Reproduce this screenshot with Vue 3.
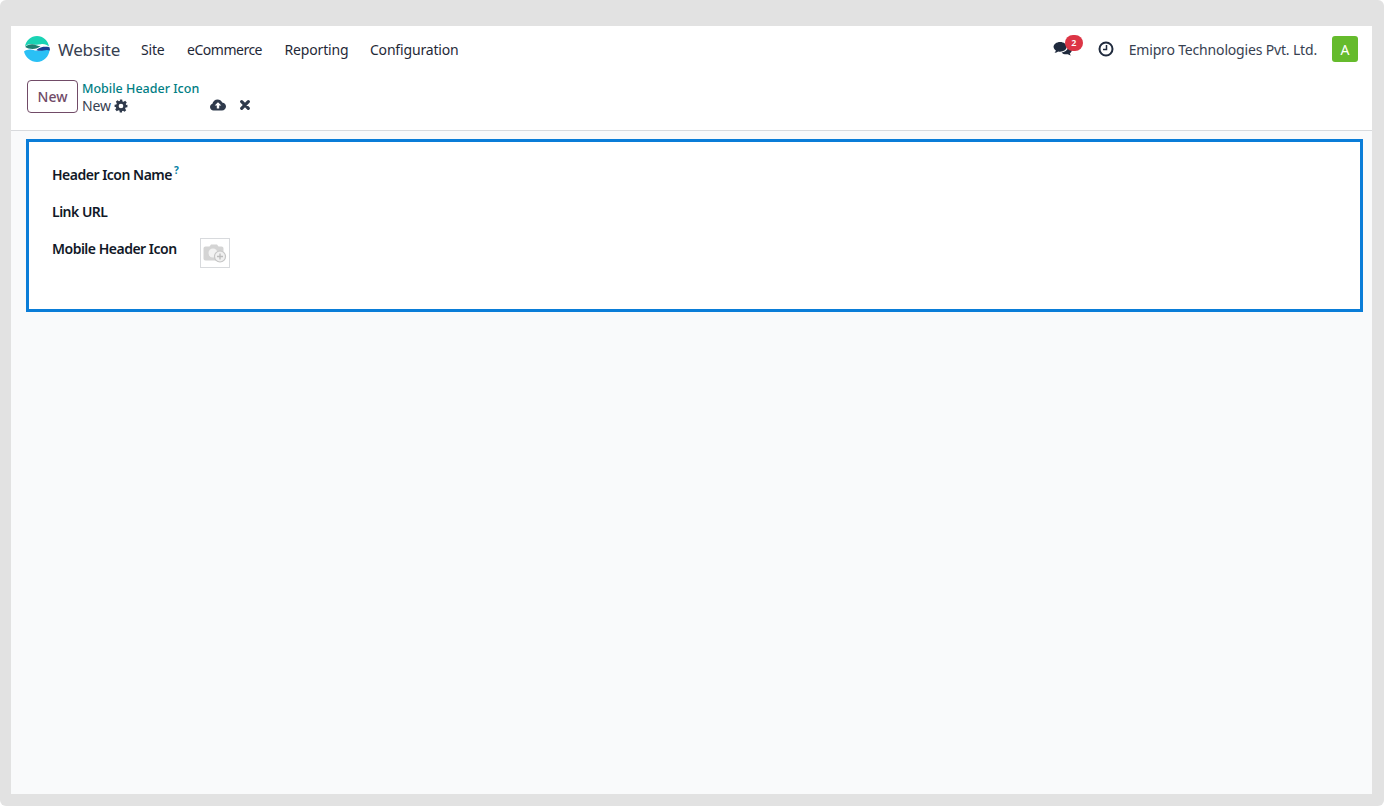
<script setup>
const menus = ['Site', 'eCommerce', 'Reporting', 'Configuration']
const fields = [
  { label: 'Header Icon Name', help: true },
  { label: 'Link URL' },
  { label: 'Mobile Header Icon', image: true }
]
</script>

<template>
  <div class="frame">
    <div class="window">
      <header class="navbar">
        <svg class="logo" viewBox="0 0 26 26" width="26" height="26">
          <path d="M1 10.500C2 4.500 7 0 13 0s11 4.500 12 10.500c-2-1.800-5-2.800-8-2.300-3 .5-5 .8-8 0-3-.8-6 0-8 2.300z" fill="#1ad3b4"/>
          <path d="M1.200 11C3.500 8.300 7 7.600 10 8.500c2 .6 4 1.500 6.500 1.800-2 1.500-4.500 2.700-8 2.700-3 0-5.500-.8-7.300-2z" fill="#1f7f72"/>
          <path d="M0 15.500c2.500-1.800 5-2.400 8-1.700 3 .7 5 1.300 8 .7 3.500-.7 6.500-1.700 9.700-1.500C25.200 20.500 19.800 26 13 26 6.800 26 1.500 21.800 0 15.500z" fill="#2ac0f5"/>
          <path d="M14.500 12.500c3-1.500 6-2.200 11-1.200.4 1.300.5 2.300.4 3.100-2-.7-4-.7-6.400 0-2.500.7-5 .5-7-.2.500-.6 1-1.200 2-1.700z" fill="#1c3f94"/>
        </svg>
        <span class="brand">Website</span>
        <nav class="menu">
          <span v-for="m in menus" :key="m" class="menu-item">{{ m }}</span>
        </nav>
        <div class="systray">
          <span class="chat">
            <svg viewBox="0 0 20 17" width="19" height="16" class="icon">
              <path d="M7.500 1C3.600 1 .5 3.300 .5 6.200c0 1.600 1 3 2.500 4-.3.900-.8 1.700-1.500 2.400 1.400-.1 2.800-.6 3.900-1.500.7.100 1.400.2 2.100.2 3.900 0 7-2.300 7-5.100S11.400 1 7.500 1z" fill="#1f2a3d"/>
              <path d="M16 5.800c0 3.300-3.100 6-7 6.300 1 1.300 2.800 2.100 5 2.100.6 0 1.200-.1 1.700-.2 1 .8 2.100 1.200 3.300 1.300-.6-.6-1-1.300-1.300-2.100 1.400-.9 2.300-2.200 2.300-3.600 0-1.600-1.500-3-3.800-3.700z" fill="#1f2a3d"/>
            </svg>
            <span class="badge">2</span>
          </span>
          <svg viewBox="0 0 16 16" width="16" height="16" class="clock">
            <circle cx="8" cy="8" r="6.500" fill="none" stroke="#1f2a3d" stroke-width="2"/>
            <path d="M8.500 4v4.500H5" fill="none" stroke="#1f2a3d" stroke-width="1.500"/>
          </svg>
          <span class="company">Emipro Technologies Pvt. Ltd.</span>
          <span class="avatar">A</span>
        </div>
      </header>

      <div class="control">
        <button class="new-btn">New</button>
        <div class="crumbs">
          <a class="crumb-link">Mobile Header Icon</a>
          <div class="crumb-cur">
            <span>New</span>
            <svg viewBox="0 0 24 24" width="14" height="14">
              <path fill-rule="evenodd" d="M10 1h4l.6 3.100c.7.200 1.300.5 1.900.8l2.600-1.800 2.800 2.800-1.800 2.600c.3.600.6 1.200.8 1.900L23 10v4l-3.100.6c-.2.700-.5 1.300-.8 1.900l1.800 2.600-2.800 2.800-2.600-1.800c-.6.300-1.200.6-1.900.8L13.900 23h-4l-.6-3.100c-.7-.2-1.300-.5-1.900-.8l-2.600 1.800L2 18.100l1.800-2.600c-.3-.6-.6-1.200-.8-1.900L1 13.900v-4l3.100-.6c.2-.7.500-1.300.8-1.900L3.100 4.900l2.800-2.800 2.600 1.800c.6-.3 1.200-.6 1.900-.8L10 1zm2 7a4 4 0 1 0 0 8 4 4 0 0 0 0-8z" fill="#2f3a4c"/>
            </svg>
          </div>
        </div>
        <div class="actions">
          <svg viewBox="0 0 16 12" width="16" height="12">
            <path fill-rule="evenodd" d="M3.500 11.500C1.600 11.500 0 10 0 8.100c0-1.500 1-2.800 2.400-3.300C2.800 2.500 5 .5 7.600.5c2 0 3.800 1.100 4.600 2.900 2.100.2 3.800 2 3.800 4.100 0 2.200-1.800 4-4 4h-8.500zM8 3.200 4.700 6.500h2.100v3h2.400v-3h2.100L8 3.200z" fill="#2f3a4c"/>
          </svg>
          <svg viewBox="0 0 10 10" width="10" height="10">
            <path d="M1.700 1.700l6.600 6.600M8.300 1.700 1.700 8.300" stroke="#2f3a4c" stroke-width="3.200" stroke-linecap="round"/>
          </svg>
        </div>
      </div>

      <main class="content">
        <form class="sheet">
          <div v-for="f in fields" :key="f.label" class="row">
            <label class="label">{{ f.label }}<sup v-if="f.help" class="help">?</sup></label>
            <div v-if="f.image" class="thumb">
              <svg viewBox="0 0 24 20" width="24" height="20">
                <path d="M2.500 3.500h4l1.500-2h6l1.500 2h3c1.200 0 2 .8 2 2v10c0 1.200-.8 2-2 2h-16c-1.200 0-2-.8-2-2v-10c0-1.200.8-2 2-2z" fill="#d4d4d4"/>
                <circle cx="10" cy="10" r="4.500" fill="#f2f2f2"/>
                <circle cx="17" cy="13.500" r="5.500" fill="#f0f0f0" stroke="#c6c6c6" stroke-width="1.200"/>
                <path d="M17 10.500v6M14 13.500h6" stroke="#bcbcbc" stroke-width="1.300"/>
              </svg>
            </div>
          </div>
        </form>
      </main>
    </div>
  </div>
</template>

<style>
html, body { margin: 0; background: #fff; }
</style>

<style scoped>
.frame {
  width: 1384px;
  height: 806px;
  box-sizing: border-box;
  padding: 26px 12px 12px 11px;
  background: #e2e2e2;
  border-radius: 6px;
  font-family: "Noto Sans", sans-serif;
  font-size: 14px;
  letter-spacing: -0.17px;
  color: #374151;
  overflow: hidden;
}
.window {
  height: 100%;
  display: flex;
  flex-direction: column;
  background: #f9fafb;
}
.navbar {
  height: 46px;
  display: flex;
  align-items: center;
  background: #fff;
  padding: 0 14px 0 13px;
  flex: none;
}
.logo { flex: none; }
.brand { font-size: 17px; margin-left: 8px; color: #374151; letter-spacing: -0.25px; }
.menu { display: flex; gap: 21px; margin-left: 21px; color: #1f2937; }
.menu-item:nth-child(2) { letter-spacing: -0.5px; margin-left: 1.500px; }
.menu-item:nth-child(3) { margin-left: 1.500px; }
.menu-item:nth-child(4) { margin-left: 0.500px; }
.systray { margin-left: auto; display: flex; align-items: center; }
.chat { position: relative; display: flex; }
.icon { display: block; }
.badge {
  position: absolute;
  left: 12px;
  top: -6px;
  width: 18px;
  height: 16px;
  border-radius: 8px;
  background: #dc3545;
  color: #fff;
  font-size: 9px;
  font-weight: 600;
  line-height: 16px;
  text-align: center;
}
.clock { margin-left: 26px; }
.company { margin-left: 15px; color: #374151; }
.avatar {
  margin-left: 15px;
  width: 26px;
  height: 26px;
  border-radius: 3px;
  background: #65bb2c;
  color: #fff;
  display: flex;
  align-items: center;
  justify-content: center;
  font-size: 14px;
}
.control {
  height: 59px;
  flex: none;
  box-sizing: border-box;
  background: #fff;
  border-bottom: 1px solid #d8dadd;
  display: flex;
  align-items: flex-start;
  padding: 8px 0 0 16px;
}
.new-btn {
  width: 51px;
  height: 33px;
  box-sizing: border-box;
  background: #fff;
  border: 1px solid #714b67;
  border-radius: 4px;
  color: #714b67;
  font: 500 14px "Noto Sans", sans-serif;
  padding: 0;
}
.crumbs { margin-left: 4px; width: 128px; display: flex; flex-direction: column; }
.crumb-link { color: #017e84; font-size: 12.500px; font-weight: 500; line-height: 17px; letter-spacing: 0; }
.crumb-cur { display: flex; align-items: center; gap: 3px; line-height: 18px; color: #374151; }
.actions { display: flex; align-items: center; gap: 14px; margin-top: 19px; }
.content { flex: 1; padding: 8px 9px 0 15px; }
.sheet {
  height: 173px;
  box-sizing: border-box;
  border: 3px solid #0a7dd8;
  background: #fff;
  padding: 23px 23px 0;
}
.row { display: flex; align-items: flex-start; height: 37px; }
.label { width: 148px; color: #111827; font-weight: 600; line-height: 20px; white-space: nowrap; letter-spacing: -0.5px; }
.help { color: #0180a5; font-size: 10px; font-weight: 700; margin-left: 2px; line-height: 0; vertical-align: 6px; }
.thumb {
  width: 30px;
  height: 30px;
  box-sizing: border-box;
  border: 1px solid #d8dadd;
  display: flex;
  align-items: center;
  justify-content: center;
  background: #fff;
  margin-top: -1px;
}
</style>
